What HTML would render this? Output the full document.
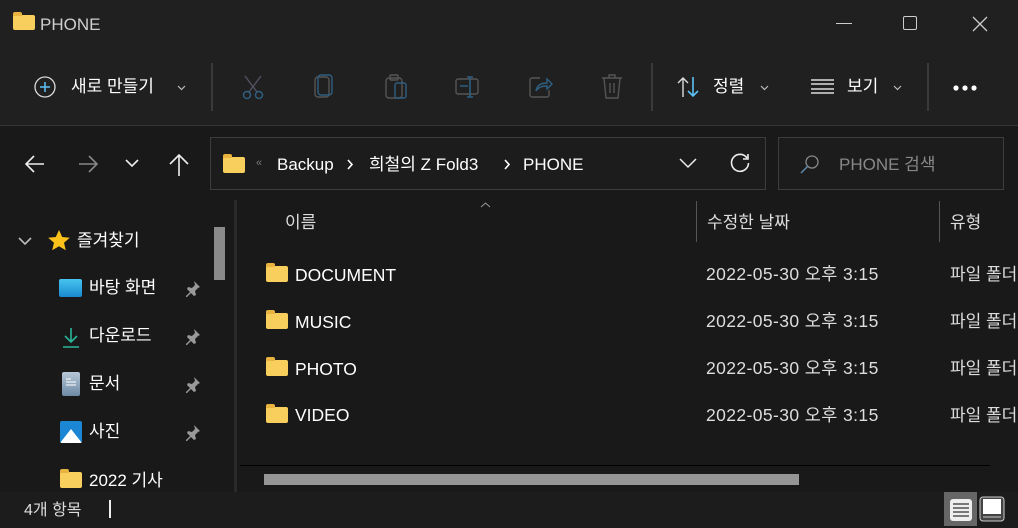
<!DOCTYPE html>
<html><head><meta charset="utf-8"><style>
*{margin:0;padding:0;box-sizing:border-box}
body{width:1018px;height:528px;overflow:hidden;background:#191919;font-family:"Liberation Sans","Noto Sans CJK KR",sans-serif;color:#fff;position:relative}
.a{position:absolute}
.t{font-size:17px;white-space:nowrap;line-height:20px}
.fold{position:absolute;width:22px;height:16px;background:#f8cf5c;border-radius:2px}
.fold:before{content:"";position:absolute;left:0;top:-3px;width:9px;height:4px;background:#e9b33f;border-radius:2px 2px 0 0}
</style></head><body>
<div class="a" style="left:0;top:0;width:1018px;height:126px;background:#202020;border-bottom:1px solid #363636"></div>
<div class="fold" style="left:13px;top:15px;width:22px;height:15px"></div>
<div class="a t" style="left:40px;top:15px;color:#cfcfcf">PHONE</div>
<div class="a" style="left:836px;top:23px;width:16px;height:1px;background:#ccc"></div>
<div class="a" style="left:903px;top:16px;width:14px;height:14px;border:1px solid #ccc;border-radius:2px"></div>
<svg class="a" style="left:972px;top:16px" width="16" height="16"><path d="M1 1l14 14M15 1L1 15" stroke="#ccc" stroke-width="1.3"/></svg>
<!-- toolbar -->
<svg class="a" style="left:34px;top:76px" width="24" height="24"><circle cx="11" cy="11" r="10" fill="none" stroke="#ddd" stroke-width="1.3"/><path d="M11 6v10M6 11h10" stroke="#5cc1f5" stroke-width="1.5"/></svg>
<div class="a t" style="left:71px;top:77px">새로 만들기</div>
<svg class="a" style="left:177px;top:85px" width="9" height="6"><path d="M1 1l3.5 3.5L8 1" fill="none" stroke="#bbb" stroke-width="1.2"/></svg>
<div class="a" style="left:211px;top:63px;width:2px;height:48px;background:#3a3a3a"></div>
<svg class="a" style="left:240px;top:74px" width="26" height="26"><path d="M5 2l12 16M21 2L9 18" stroke="#556" stroke-width="1.3"/><circle cx="7" cy="21" r="3.5" fill="none" stroke="#2f5f80" stroke-width="1.5"/><circle cx="19" cy="21" r="3.5" fill="none" stroke="#2f5f80" stroke-width="1.5"/></svg>
<svg class="a" style="left:314px;top:74px" width="22" height="26"><rect x="1" y="3" width="14" height="20" rx="3" fill="none" stroke="#555" stroke-width="1.4"/><rect x="4" y="1" width="14" height="20" rx="3" fill="none" stroke="#2f5f80" stroke-width="1.4"/></svg>
<svg class="a" style="left:385px;top:74px" width="24" height="26"><rect x="1" y="4" width="16" height="20" rx="3" fill="none" stroke="#555" stroke-width="1.4"/><rect x="5" y="1" width="8" height="5" rx="1" fill="none" stroke="#555" stroke-width="1.4"/><rect x="10" y="9" width="11" height="15" rx="2" fill="none" stroke="#2f5f80" stroke-width="1.4"/></svg>
<svg class="a" style="left:455px;top:76px" width="26" height="22"><rect x="1" y="3" width="22" height="15" rx="2" fill="none" stroke="#555" stroke-width="1.4"/><path d="M5 10h8M15 1v20M12 1h6M12 21h6" stroke="#2f5f80" stroke-width="1.6"/></svg>
<svg class="a" style="left:528px;top:75px" width="26" height="24"><path d="M12 3H4a2 2 0 0 0-2 2v15a2 2 0 0 0 2 2h15a2 2 0 0 0 2-2v-5" fill="none" stroke="#555" stroke-width="1.4"/><path d="M8 16c1-6 5-8 11-8V4l5 5-5 5v-3c-5 0-8 1-11 5z" fill="none" stroke="#2f5f80" stroke-width="1.4"/></svg>
<svg class="a" style="left:601px;top:74px" width="22" height="26"><path d="M1 4h20M8 4V1h6v3M3 4l2 20h12l2-20M9 9v10M13 9v10" fill="none" stroke="#555" stroke-width="1.4"/></svg>
<div class="a" style="left:651px;top:63px;width:2px;height:48px;background:#3a3a3a"></div>
<svg class="a" style="left:676px;top:76px" width="26" height="22"><path d="M7 21V2M2 7l5-5 5 5" fill="none" stroke="#ddd" stroke-width="1.4"/><path d="M17 1v19M12 15l5 5 5-5" fill="none" stroke="#5cc1f5" stroke-width="1.6"/></svg>
<div class="a t" style="left:713px;top:77px">정렬</div>
<svg class="a" style="left:760px;top:85px" width="9" height="6"><path d="M1 1l3.5 3.5L8 1" fill="none" stroke="#bbb" stroke-width="1.2"/></svg>
<svg class="a" style="left:810px;top:79px" width="26" height="16"><path d="M1 1h23M1 5h23M1 10h23M1 14h23" stroke="#ddd" stroke-width="1.4"/></svg>
<div class="a t" style="left:847px;top:77px">보기</div>
<svg class="a" style="left:893px;top:85px" width="9" height="6"><path d="M1 1l3.5 3.5L8 1" fill="none" stroke="#bbb" stroke-width="1.2"/></svg>
<div class="a" style="left:927px;top:63px;width:2px;height:48px;background:#3a3a3a"></div>
<svg class="a" style="left:952px;top:84px" width="26" height="8"><circle cx="4" cy="4" r="2.6" fill="#fff"/><circle cx="13" cy="4" r="2.6" fill="#fff"/><circle cx="22" cy="4" r="2.6" fill="#fff"/></svg>
<!-- nav -->
<svg class="a" style="left:24px;top:153px" width="22" height="22"><path d="M20 11H3M10 3l-8 8 8 8" fill="none" stroke="#eee" stroke-width="1.6"/></svg>
<svg class="a" style="left:77px;top:153px" width="22" height="22"><path d="M2 11h17M12 3l8 8-8 8" fill="none" stroke="#888" stroke-width="1.6"/></svg>
<svg class="a" style="left:125px;top:158px" width="14" height="10"><path d="M1 2l6 6 6-6" fill="none" stroke="#eee" stroke-width="1.6"/></svg>
<svg class="a" style="left:168px;top:153px" width="22" height="24"><path d="M11 23V3M2 11l9-9 9 9" fill="none" stroke="#eee" stroke-width="1.6"/></svg>
<div class="a" style="left:210px;top:137px;width:556px;height:53px;border:1px solid #3d3d3d;background:#1c1c1c"></div>
<div class="fold" style="left:223px;top:157px"></div>
<div class="a" style="left:256px;top:157px;font-size:11px;color:#777">«</div>
<div class="a t" style="left:277px;top:155px">Backup</div>
<svg class="a" style="left:347px;top:159px" width="7" height="11"><path d="M1 1l4 4.5L1 10" fill="none" stroke="#fff" stroke-width="1.6"/></svg>
<div class="a t" style="left:369px;top:155px">희철의 Z Fold3</div>
<svg class="a" style="left:504px;top:159px" width="7" height="11"><path d="M1 1l4 4.5L1 10" fill="none" stroke="#fff" stroke-width="1.6"/></svg>
<div class="a t" style="left:523px;top:155px">PHONE</div>
<svg class="a" style="left:679px;top:157px" width="18" height="12"><path d="M1 2l8 8 8-8" fill="none" stroke="#eee" stroke-width="1.5"/></svg>
<svg class="a" style="left:729px;top:152px" width="22" height="22"><path d="M18 6A8.5 8.5 0 1 0 19.5 11" fill="none" stroke="#eee" stroke-width="1.6"/><path d="M19 2v5h-5" fill="none" stroke="#eee" stroke-width="1.6"/></svg>
<div class="a" style="left:778px;top:137px;width:226px;height:53px;border:1px solid #3d3d3d;background:#1c1c1c"></div>
<svg class="a" style="left:800px;top:155px" width="20" height="20"><circle cx="12" cy="7" r="6" fill="none" stroke="#888" stroke-width="1.3"/><path d="M8 11l-7 7" stroke="#5f8aa8" stroke-width="1.5"/></svg>
<div class="a t" style="left:839px;top:155px;color:#888">PHONE 검색</div>
<!-- sidebar -->
<div class="a" style="left:214px;top:227px;width:11px;height:53px;background:#8a8a8a"></div>
<div class="a" style="left:234px;top:200px;width:3px;height:292px;background:#2a2a2a"></div>
<svg class="a" style="left:18px;top:236px" width="14" height="10"><path d="M1 2l6 6 6-6" fill="none" stroke="#bbb" stroke-width="1.6"/></svg>
<svg class="a" style="left:47px;top:229px" width="24" height="23"><path d="M12 1l3.2 7 7.6.7-5.8 5 1.8 7.5L12 17.3 5.2 21.2 7 13.7 1.2 8.7 8.8 8z" fill="#fcc21b"/></svg>
<div class="a t" style="left:77px;top:231px">즐겨찾기</div>
<div class="a" style="left:59px;top:279px;width:23px;height:18px;background:linear-gradient(#47c4ef,#1a8ad0);border-radius:2px"></div>
<div class="a t" style="left:89px;top:278px">바탕 화면</div>
<svg class="a" style="left:62px;top:327px" width="18" height="21"><path d="M9 1v13M3 9l6 6 6-6M1 20h16" fill="none" stroke="#2bb59a" stroke-width="1.6"/></svg>
<div class="a t" style="left:89px;top:326px">다운로드</div>
<div class="a" style="left:62px;top:372px;width:18px;height:24px;background:linear-gradient(#b7c7d6,#6d8aa6);border-radius:2px"></div>
<svg class="a" style="left:65px;top:378px" width="12" height="8"><path d="M1 1h5M1 4h10M1 7h10" stroke="#fff" stroke-width="1"/></svg>
<div class="a t" style="left:89px;top:374px">문서</div>
<div class="a" style="left:60px;top:421px;width:22px;height:22px;background:#1b86d4;border-radius:2px;overflow:hidden"><div style="position:absolute;left:0;top:8px;border-left:11px solid transparent;border-right:11px solid transparent;border-bottom:14px solid #fff;width:0"></div></div>
<div class="a t" style="left:89px;top:422px">사진</div>
<div class="fold" style="left:60px;top:472px"></div>
<div class="a t" style="left:89px;top:471px">2022 기사</div>
<svg width="0" height="0" style="position:absolute"><defs><g id="pin"><path d="M9 1l6 6-2 1-3 3 1 4-2 1-3-3-4 4-1 0 0-1 4-4-3-3 1-2 4 1 3-3z" fill="#999"/></g></defs></svg>
<svg class="a" style="left:185px;top:280px" width="17" height="17"><use href="#pin"/></svg>
<svg class="a" style="left:185px;top:328px" width="17" height="17"><use href="#pin"/></svg>
<svg class="a" style="left:185px;top:376px" width="17" height="17"><use href="#pin"/></svg>
<svg class="a" style="left:185px;top:424px" width="17" height="17"><use href="#pin"/></svg>
<!-- list -->
<svg class="a" style="left:480px;top:202px" width="11" height="6"><path d="M1 5l4.5-4L10 5" fill="none" stroke="#999" stroke-width="1"/></svg>
<div class="a t" style="left:285px;top:213px;color:#ddd">이름</div>
<div class="a" style="left:696px;top:201px;width:1px;height:41px;background:#555"></div>
<div class="a t" style="left:707px;top:213px;color:#ddd">수정한 날짜</div>
<div class="a" style="left:939px;top:201px;width:1px;height:41px;background:#555"></div>
<div class="a t" style="left:950px;top:213px;color:#ddd">유형</div>
<div class="fold" style="left:266px;top:266px"></div><div class="a t" style="left:295px;top:265px;font-size:17.5px">DOCUMENT</div>
<div class="fold" style="left:266px;top:313px"></div><div class="a t" style="left:295px;top:312px;font-size:17.5px">MUSIC</div>
<div class="fold" style="left:266px;top:360px"></div><div class="a t" style="left:295px;top:359px;font-size:17.5px">PHOTO</div>
<div class="fold" style="left:266px;top:407px"></div><div class="a t" style="left:295px;top:405px;font-size:17.5px">VIDEO</div>
<div class="a t" style="left:706px;top:265px;color:#ddd;line-height:47px;margin-top:-14px;font-size:17.5px;letter-spacing:0.4px">2022-05-30 오후 3:15<br>2022-05-30 오후 3:15<br>2022-05-30 오후 3:15<br>2022-05-30 오후 3:15</div>
<div class="a t" style="left:950px;top:265px;color:#ddd;line-height:47px;margin-top:-14px">파일 폴더<br>파일 폴더<br>파일 폴더<br>파일 폴더</div>
<div class="a" style="left:240px;top:465px;width:750px;height:1px;background:#000"></div>
<div class="a" style="left:264px;top:474px;width:535px;height:11px;background:#959595"></div>
<!-- status -->
<div class="a" style="left:0;top:492px;width:1018px;height:36px;background:#1c1c1c"></div>
<div class="a" style="left:24px;top:501px;font-size:16px;color:#ddd;line-height:20px">4개 항목</div>
<div class="a" style="left:109px;top:500px;width:2px;height:18px;background:#eee"></div>
<div class="a" style="left:944px;top:492px;width:33px;height:34px;background:#666"></div>
<svg class="a" style="left:949px;top:498px" width="24" height="24"><rect x="1" y="1" width="22" height="22" rx="3" fill="#eee"/><path d="M4 6h16M4 10h16M4 14h16M4 18h16" stroke="#333" stroke-width="1.2"/></svg>
<svg class="a" style="left:979px;top:496px" width="26" height="26"><rect x="1" y="1" width="24" height="24" rx="3" fill="#444" stroke="#ccc"/><rect x="4" y="3" width="18" height="15" fill="#fff"/><path d="M4 21h18" stroke="#ccc"/></svg>
</body></html>
